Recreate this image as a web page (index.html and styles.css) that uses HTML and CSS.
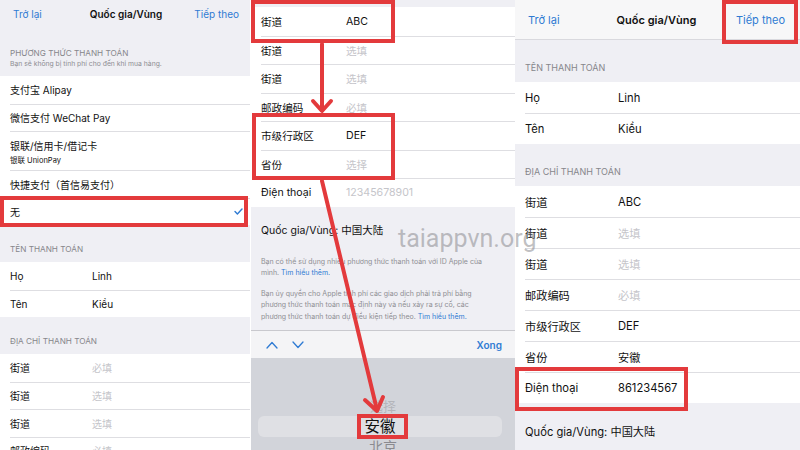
FILE: index.html
```html
<!doctype html>
<html>
  <head>
    <meta charset="utf-8">
    <title>Quốc gia/Vùng</title>
    <link rel="stylesheet" href="styles.css">
  </head>
  <body>
    <div class="shots">
      <!-- first screen: payment method -->
      <section class="phone p1">
        <header class="nav">
          <span class="link">Trở lại</span>
          <span class="title">Quốc gia/Vùng</span>
          <span class="link next">Tiếp theo</span>
        </header>
        <div class="group-head first">
          <div class="caption">PHƯƠNG THỨC THANH TOÁN</div>
          <div class="note">Bạn sẽ không bị tính phí cho đến khi mua hàng.</div>
        </div>
        <ul class="list">
          <li class="row">支付宝 Alipay</li>
          <li class="row">微信支付 WeChat Pay</li>
          <li class="row tall">
            <div>银联/信用卡/借记卡</div>
            <div class="sub">银联 UnionPay</div>
          </li>
          <li class="row">快捷支付（首信易支付）</li>
          <li class="row checked">
            <span>无</span>
            <svg class="check" width="9" height="7" viewBox="0 0 9 7">
              <path d="M1 3.6 L3.4 6 L8 1" fill="none" stroke="#2f7bd3" stroke-width="1.4" stroke-linecap="round" stroke-linejoin="round"/>
            </svg>
          </li>
        </ul>
        <div class="group-head">
          <div class="caption">TÊN THANH TOÁN</div>
        </div>
        <ul class="list">
          <li class="row"><span class="key">Họ</span><span>Linh</span></li>
          <li class="row"><span class="key">Tên</span><span>Kiều</span></li>
        </ul>
        <div class="group-head">
          <div class="caption">ĐỊA CHỈ THANH TOÁN</div>
        </div>
        <ul class="list">
          <li class="row"><span class="key">街道</span><span class="hint">必填</span></li>
          <li class="row"><span class="key">街道</span><span class="hint">选填</span></li>
          <li class="row"><span class="key">街道</span><span class="hint">选填</span></li>
          <li class="row"><span class="key">邮政编码</span><span class="hint">必填</span></li>
        </ul>
      </section>

      <!-- second screen: address with province picker -->
      <section class="phone p2">
        <div class="top-gap"></div>
        <ul class="list">
          <li class="row"><span class="key">街道</span><span>ABC</span></li>
          <li class="row"><span class="key">街道</span><span class="hint">选填</span></li>
          <li class="row"><span class="key">街道</span><span class="hint">选填</span></li>
          <li class="row"><span class="key">邮政编码</span><span class="hint">必填</span></li>
          <li class="row"><span class="key">市级行政区</span><span>DEF</span></li>
          <li class="row"><span class="key">省份</span><span class="hint">选择</span></li>
          <li class="row"><span class="key">Điện thoại</span><span class="hint">12345678901</span></li>
        </ul>
        <div class="footer">
          <div class="country">Quốc gia/Vùng: 中国大陆</div>
          <p class="fine">Bạn có thể sử dụng nhiều phương thức thanh toán với ID Apple của<br>mình. <span class="more">Tìm hiểu thêm.</span></p>
          <p class="fine">Bạn ủy quyền cho Apple tính phí các giao dịch phải trả phí bằng<br>phương thức thanh toán mặc định này và nếu xảy ra sự cố, các<br>phương thức thanh toán dự điều kiện tiếp theo. <span class="more">Tìm hiểu thêm.</span></p>
        </div>
        <div class="toolbar">
          <svg width="12" height="8" viewBox="0 0 12 8"><path d="M1 7 L6 1.5 L11 7" fill="none" stroke="#2f7bd3" stroke-width="1.3" stroke-linecap="round" stroke-linejoin="round"/></svg>
          <svg width="12" height="8" viewBox="0 0 12 8"><path d="M1 1 L6 6.5 L11 1" fill="none" stroke="#2f7bd3" stroke-width="1.3" stroke-linecap="round" stroke-linejoin="round"/></svg>
          <span class="done">Xong</span>
        </div>
        <div class="picker">
          <div class="option faint">选择</div>
          <div class="option current">安徽</div>
          <div class="option">北京</div>
        </div>
      </section>

      <!-- third screen: filled form -->
      <section class="phone p3">
        <header class="nav">
          <span class="link">Trở lại</span>
          <span class="title">Quốc gia/Vùng</span>
          <span class="link next">Tiếp theo</span>
        </header>
        <div class="group-head">
          <div class="caption">TÊN THANH TOÁN</div>
        </div>
        <ul class="list">
          <li class="row"><span class="key">Họ</span><span>Linh</span></li>
          <li class="row"><span class="key">Tên</span><span>Kiều</span></li>
        </ul>
        <div class="group-head">
          <div class="caption">ĐỊA CHỈ THANH TOÁN</div>
        </div>
        <ul class="list">
          <li class="row"><span class="key">街道</span><span>ABC</span></li>
          <li class="row"><span class="key">街道</span><span class="hint">选填</span></li>
          <li class="row"><span class="key">街道</span><span class="hint">选填</span></li>
          <li class="row"><span class="key">邮政编码</span><span class="hint">必填</span></li>
          <li class="row"><span class="key">市级行政区</span><span>DEF</span></li>
          <li class="row"><span class="key">省份</span><span>安徽</span></li>
          <li class="row"><span class="key">Điện thoại</span><span>861234567</span></li>
        </ul>
        <div class="country">Quốc gia/Vùng: 中国大陆</div>
      </section>

      <!-- annotations drawn over the screens -->
      <div class="mark m-none"></div>
      <div class="mark m-street"></div>
      <div class="mark m-region"></div>
      <div class="mark m-pick"></div>
      <div class="mark m-next"></div>
      <div class="mark m-phone"></div>
      <svg class="arrows" width="800" height="450" viewBox="0 0 800 450">
        <g fill="none" stroke="#e33a3c" stroke-width="4" stroke-linecap="round" stroke-linejoin="round">
          <line x1="322" y1="44" x2="322" y2="110"/>
          <polyline points="313,101 322,111 331,101"/>
          <line x1="322" y1="181" x2="377" y2="410"/>
          <polyline points="365,400 377,411 383,397"/>
        </g>
      </svg>
      <div class="watermark">taiappvn.org</div>
    </div>
  </body>
</html>
```

FILE: styles.css
```css
body {
  margin: 0;
  font-family: Inter, "Noto Sans CJK SC", sans-serif;
  color: #111;
}

.shots {
  position: relative;
  display: flex;
  width: 800px;
  height: 450px;
  overflow: hidden;
  background: #fff;
}

.phone {
  display: flex;
  flex-direction: column;
  background: #efeff4;
  overflow: hidden;
}
.p1 {
  width: 250px;
  font-size: 10px;
  --row: 27.5px;
  --key: 82px;
}
.p2 {
  width: 264px;
  margin-left: 1px;
  font-size: 10.6px;
  --row: 28.5px;
  --key: 85px;
}
.p3 {
  flex: 1;
  font-size: 11.2px;
  --row: 31px;
  --key: 93px;
}

/* navigation bar */
.nav {
  display: grid;
  grid-template-columns: 1fr auto 1fr;
  align-items: center;
  flex: none;
}
.nav .link {
  color: #2f7bd3;
}
.nav .next {
  justify-self: end;
}
.nav .title {
  font-weight: 600;
}
.p1 .nav {
  height: 28px;
  padding: 0 11px 0 13px;
}
.p3 .nav {
  height: 40px;
  padding: 0 15px 0 13px;
  font-size: 11px;
  background: #f7f7f8;
  border-bottom: 1px solid #d9d9de;
  box-sizing: border-box;
}

/* section captions */
.group-head {
  display: flex;
  flex-direction: column;
  justify-content: flex-end;
  flex: none;
  padding: 0 10px 7.5px;
  height: 37px;
  box-sizing: border-box;
  color: #86868b;
}
.caption {
  font-size: 8.2px;
  line-height: 11px;
}
.note {
  font-size: 6.8px;
  line-height: 10px;
  color: #8e8e93;
}
.p1 .group-head.first {
  height: 48px;
  padding-bottom: 7px;
}
.p3 .group-head {
  height: 42px;
  padding-bottom: 9.5px;
}
.p3 .caption {
  font-size: 9px;
}

/* rows */
.list {
  list-style: none;
  margin: 0;
  padding: 0;
  background: #fff;
  flex: none;
}
.row {
  display: flex;
  align-items: center;
  height: var(--row);
  margin-left: 10px;
  border-top: 1px solid #dedee2;
  box-sizing: border-box;
}
.row:first-child {
  border-top: 0;
}
.row.tall {
  height: 39px;
  flex-direction: column;
  align-items: flex-start;
  justify-content: center;
  gap: 1px;
}
.row .sub {
  font-size: 7.5px;
}
.row.checked {
  justify-content: space-between;
  padding-right: 7px;
}
.key {
  width: var(--key);
  flex: none;
}
.hint {
  color: #c5c5ca;
}

/* second screen */
.top-gap {
  height: 7px;
  flex: none;
}
.footer {
  flex: 1;
  padding: 0 10px;
}
.country {
  padding: 17px 10px 0;
  line-height: 14px;
  font-size: 10.5px;
}
.footer .country {
  padding-left: 0;
  padding-right: 0;
}
.fine {
  margin: 18px 0 0;
  font-size: 7px;
  line-height: 11.5px;
  color: #8e8e93;
  white-space: nowrap;
}
.fine + .fine {
  margin-top: 9px;
}
.more {
  color: #2f7bd3;
}
.toolbar {
  display: flex;
  align-items: center;
  gap: 14px;
  height: 28px;
  flex: none;
  padding: 0 13px 0 15px;
  background: #f4f4f6;
  border-top: 1px solid #c9c9ce;
  box-sizing: border-box;
}
.toolbar .done {
  margin-left: auto;
  color: #2f7bd3;
  font-weight: 600;
  font-size: 10px;
}
.picker {
  height: 92px;
  flex: none;
  padding-top: 38px;
  background: #d2d4da;
  box-sizing: border-box;
}
.option {
  height: 20px;
  line-height: 20px;
  text-align: center;
  font-size: 14px;
  color: #8a8a8f;
}
.option.faint {
  color: #b4b5ba;
  font-size: 13px;
}
.option.current {
  height: 21px;
  line-height: 21px;
  margin: 0 13px 0 7px;
  border-radius: 6px;
  background: #dfe0e4;
  font-size: 15.5px;
  color: #111;
}

/* third screen */
.p3 .country {
  padding-top: 22px;
  font-size: 11.2px;
}

/* annotations */
.mark {
  position: absolute;
  border: 4px solid #e33a3c;
  box-sizing: border-box;
}
.m-none {
  left: 0;
  top: 196px;
  width: 248px;
  height: 31px;
}
.m-street {
  left: 251px;
  top: 0;
  width: 144px;
  height: 43px;
}
.m-region {
  left: 252px;
  top: 113px;
  width: 143px;
  height: 67px;
}
.m-pick {
  left: 357px;
  top: 414px;
  width: 51px;
  height: 25px;
}
.m-next {
  left: 722px;
  top: 0;
  width: 76px;
  height: 44px;
}
.m-phone {
  left: 515px;
  top: 367px;
  width: 173px;
  height: 44px;
}
.arrows {
  position: absolute;
  left: 0;
  top: 0;
  pointer-events: none;
}
.watermark {
  position: absolute;
  left: 398px;
  top: 226px;
  font-family: Roboto, sans-serif;
  font-size: 25px;
  line-height: 25px;
  color: rgba(130, 130, 135, 0.5);
}
```
